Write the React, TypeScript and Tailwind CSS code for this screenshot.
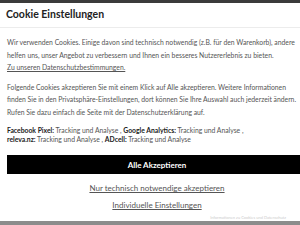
export default function App() {
  return (
    <div className="relative h-[225px] w-[300px] overflow-hidden bg-white font-['Lato',sans-serif]">
      <div className="h-[3px] bg-[#3b3b3b]" />
      <div className="w-[314px]">
        <div className="border-b border-[#ececec] px-[6px] pb-[6px] pt-[4px]">
          <h1 className="text-[10.5px] font-bold leading-[14px] text-[#222]">Cookie Einstellungen</h1>
        </div>
        <div className="px-[7px] pt-[8px] text-[6.8px] text-[#555]">
          <p className="whitespace-nowrap leading-[12.5px]">
            Wir verwenden Cookies. Einige davon sind technisch notwendig (z.B. für den Warenkorb), andere
            <br />
            helfen uns, unser Angebot zu verbessern und Ihnen ein besseres Nutzererlebnis zu bieten.
            <br />
            <a href="#" className="underline">Zu unseren Datenschutzbestimmungen.</a>
          </p>
          <p className="mt-[7px] whitespace-nowrap leading-[12.5px]">
            Folgende Cookies akzeptieren Sie mit einem Klick auf Alle akzeptieren. Weitere Informationen
            <br />
            finden Sie in den Privatsphäre-Einstellungen, dort können Sie Ihre Auswahl auch jederzeit ändern.
            <br />
            Rufen Sie dazu einfach die Seite mit der Datenschutzerklärung auf.
          </p>
          <p className="mt-[8px] whitespace-nowrap leading-[9px]">
            <b className="text-[#222]">Facebook Pixel:</b> Tracking und Analyse , <b className="text-[#222]">Google Analytics:</b> Tracking und Analyse ,
            <br />
            <b className="text-[#222]">releva.nz:</b> Tracking und Analyse , <b className="text-[#222]">ADcell:</b> Tracking und Analyse
          </p>
          <button className="mt-[11px] flex h-[19px] w-full items-center justify-center bg-black text-[8px] font-bold text-white">
            Alle Akzeptieren
          </button>
          <div className="mt-[8px] flex flex-col items-center gap-[5px] text-[8px] text-[#555]">
            <a href="#" className="leading-[12px] underline">Nur technisch notwendige akzeptieren</a>
            <a href="#" className="leading-[12px] underline">Individuelle Einstellungen</a>
          </div>
        </div>
      </div>
      <div className="absolute bottom-[4px] right-[14px] text-[4px] text-[#ccc]">Informationen zu Cookies und Datenschutz</div>
      <div className="absolute bottom-0 left-0 h-[4px] w-full bg-[#8c8c8c]" />
    </div>
  )
}
